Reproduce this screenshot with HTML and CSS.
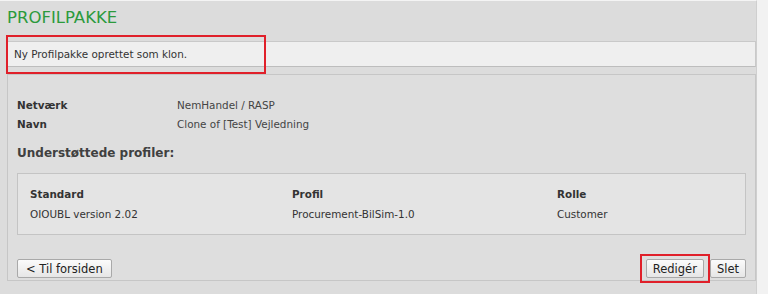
FILE: index.html
```html
<!DOCTYPE html>
<html lang="da">
<head>
    <meta charset="UTF-8">
    <title>Profilpakke</title>
    <link rel="stylesheet" href="styles.css">
</head>
<body>
    <div class="page">
        <h1 class="title">PROFILPAKKE</h1>

        <div class="message marked">Ny Profilpakke oprettet som klon.</div>

        <div class="panel">
            <div class="info">
                <div class="label">Netværk</div>
                <div class="value">NemHandel / RASP</div>
                <div class="label">Navn</div>
                <div class="value">Clone of [Test] Vejledning</div>
            </div>

            <h2 class="subtitle">Understøttede profiler:</h2>

            <div class="profiles">
                <div class="col-a head">Standard</div>
                <div class="col-b head">Profil</div>
                <div class="col-c head">Rolle</div>
                <div class="col-a">OIOUBL version 2.02</div>
                <div class="col-b">Procurement-BilSim-1.0</div>
                <div class="col-c">Customer</div>
            </div>

            <div class="actions">
                <button class="button back">&lt; Til forsiden</button>
                <div class="right">
                    <span class="marked-btn"><button class="button">Redigér</button></span>
                    <button class="button">Slet</button>
                </div>
            </div>
        </div>
    </div>
</body>
</html>
```

FILE: styles.css
```css
body {
    margin: 0;
    background-color: #f2f2f2;
    font-family: "DejaVu Sans", Verdana, sans-serif;
    font-size: 10.4px;
    color: #333;
}

.page {
    width: 749px;
    height: 290px;
    padding: 4px 0 0 7px;
    background-color: #dcdcdc;
    border-top: 1px solid #f4f4f4;
    border-right: 1px solid #cfcfcf;
}

.title {
    margin: 0;
    height: 28px;
    line-height: 26px;
    font-size: 16.5px;
    font-weight: normal;
    color: #2c9a3c;
}

.message {
    height: 24px;
    line-height: 24px;
    padding-left: 6px;
    background-color: #efefef;
    border: 1px solid #c9c9c9;
    border-bottom-color: #bdbdbd;
    margin-top: 8px;
    position: relative;
}

.marked::after {
    content: "";
    position: absolute;
    left: -2px;
    top: -7px;
    width: 256px;
    height: 35px;
    border: 2px solid #e0202a;
}

.panel {
    margin-top: 7px;
    height: 207px;
    box-sizing: border-box;
    background-color: #dedede;
    border: 1px solid #c6c6c6;
    padding: 21px 9px 0 9px;
}

.info {
    display: grid;
    grid-template-columns: 160px 1fr;
    row-gap: 3px;
    line-height: 16px;
    margin-top: 1px;
}

.label {
    font-weight: bold;
}

.value {
    color: #444;
}

.subtitle {
    margin: 12px 0 0;
    font-size: 12px;
    line-height: 18px;
    font-weight: bold;
    color: #404040;
}

.profiles {
    margin-top: 11px;
    height: 62px;
    box-sizing: border-box;
    display: grid;
    grid-template-columns: 262px 265px 1fr;
    row-gap: 4px;
    align-content: start;
    padding: 12px 12px 0;
    background-color: #e4e4e4;
    border: 1px solid #c4c4c4;
    line-height: 16px;
}

.head {
    font-weight: bold;
}

.actions {
    display: flex;
    justify-content: space-between;
    align-items: center;
    margin-top: 19px;
}

.right {
    display: flex;
    align-items: center;
}

.button {
    font-family: "DejaVu Sans", Verdana, sans-serif;
    font-size: 11.5px;
    color: #222;
    padding: 1px 6px;
    height: 19px;
    background: linear-gradient(#fbfbfb, #e6e6e6);
    border: 1px solid #a9a9a9;
    border-radius: 2px;
    cursor: pointer;
}

.back {
    padding: 1px 8px;
}

.marked-btn {
    padding: 3px 4px;
    border: 2px solid #e0202a;
    display: flex;
}
```
